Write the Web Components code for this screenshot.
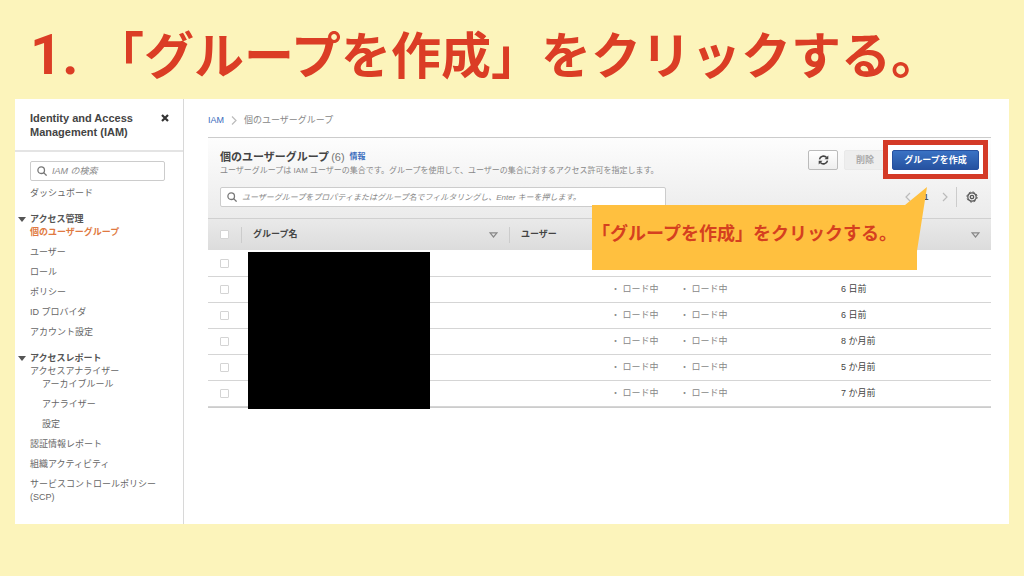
<!DOCTYPE html>
<html lang="ja">
<head>
<meta charset="utf-8">
<meta name="viewport" content="width=device-width, initial-scale=1">
<title>グループを作成</title>
<style>
  html { background: #fcf4bb; }
  body { margin: 0; font-family: "Liberation Sans", "Noto Sans CJK JP", sans-serif; font-size: 9px; line-height: 13px; color: #666; }
</style>
</head>
<body>
<tutorial-slide>
  <slide-heading slot="heading" number="1.">「グループを作成」をクリックする。</slide-heading>
  <iam-console>
    <iam-sidebar slot="sidebar">
      <nav-link>ダッシュボード</nav-link>
      <nav-section heading="アクセス管理">
        <nav-link current>個のユーザーグループ</nav-link>
        <nav-link>ユーザー</nav-link>
        <nav-link>ロール</nav-link>
        <nav-link>ポリシー</nav-link>
        <nav-link>ID プロバイダ</nav-link>
        <nav-link>アカウント設定</nav-link>
      </nav-section>
      <nav-section heading="アクセスレポート">
        <nav-link tight>アクセスアナライザー</nav-link>
        <nav-link nested>アーカイブルール</nav-link>
        <nav-link nested>アナライザー</nav-link>
        <nav-link nested>設定</nav-link>
        <nav-link>認証情報レポート</nav-link>
        <nav-link>組織アクティビティ</nav-link>
        <nav-link>サービスコントロールポリシー (SCP)</nav-link>
      </nav-section>
    </iam-sidebar>
    <bread-crumbs></bread-crumbs>
    <groups-panel>
      <group-table></group-table>
      <call-out slot="callout">「グループを作成」をクリックする。</call-out>
    </groups-panel>
  </iam-console>
</tutorial-slide>

<script>
const define = (name, html, setup) => customElements.define(name, class extends HTMLElement {
  constructor() {
    super();
    const template = document.createElement('template');
    template.innerHTML = html;
    this.attachShadow({ mode: 'open' }).append(template.content.cloneNode(true));
  }
  connectedCallback() { if (setup) setup(this, this.shadowRoot); }
});

define('tutorial-slide', `
<style>
  :host { display: block; box-sizing: border-box; padding: 22px 15px 51px; }
</style>
<slot name="heading"></slot>
<main><slot></slot></main>`);

define('slide-heading', `
<style>
  :host { display: block; height: 77px; color: #db3d25; }
  h1 { margin: 0; padding-left: 15px; display: flex; align-items: baseline; font: bold 50px/60px "Noto Sans CJK JP", sans-serif; white-space: nowrap; }
  .number { font: bold 56px/60px Roboto, sans-serif; width: 64px; }
</style>
<h1><span class="number"></span><span><slot></slot></span></h1>`,
(el, root) => { root.querySelector('.number').textContent = el.getAttribute('number'); });

define('iam-console', `
<style>
  :host { display: grid; grid-template-columns: 169px minmax(0, 1fr); background: #fff; }
  .content { padding: 13px 18px 24px 24px; }
</style>
<slot name="sidebar"></slot>
<div class="content"><slot></slot></div>`);

define('search-field', `
<style>
  :host { display: block; }
  label { display: flex; align-items: center; gap: 5px; box-sizing: border-box; height: 20px; padding: 0 6px; background: #fff; border: 1px solid #ccc; border-radius: 2px; }
  svg { flex: none; }
  input { flex: 1; min-width: 0; border: 0; padding: 0; outline: 0; background: none; font: italic var(--field-size, 9px)/13px "Liberation Sans", "Noto Sans CJK JP", sans-serif; color: #444; }
  input::placeholder { color: #888; opacity: 1; }
</style>
<label>
  <svg width="10" height="10" viewBox="0 0 10 10" fill="none" stroke="#777" stroke-width="1.3"><circle cx="4.2" cy="4.2" r="3.3"/><path d="M6.6 6.6 9.6 9.6"/></svg>
  <input type="search">
</label>`,
(el, root) => {
  const input = root.querySelector('input');
  input.placeholder = el.getAttribute('placeholder');
  input.setAttribute('aria-label', el.getAttribute('placeholder'));
});

define('iam-sidebar', `
<style>
  :host { display: block; border-right: 1px solid #d8d8d8; }
  header { display: flex; justify-content: space-between; align-items: flex-start; padding: 12px 14px 11px 15px; border-bottom: 2px solid #e4e4e4; }
  h2 { margin: 0; font: bold 11px/14px "Liberation Sans", sans-serif; color: #444; }
  button { border: 0; background: none; padding: 3px 0 0; line-height: 0; }
  .body { padding: 9px 18px 13px 15px; }
  search-field { margin-bottom: 6px; }
</style>
<header>
  <h2>Identity and Access<br>Management (IAM)</h2>
  <button type="button" aria-label="閉じる"><svg width="8" height="8" viewBox="0 0 8 8" stroke="#333" stroke-width="2.2"><path d="M1 1 7 7M7 1 1 7"/></svg></button>
</header>
<div class="body">
  <search-field placeholder="IAM の検索"></search-field>
  <nav><slot></slot></nav>
</div>`);

define('nav-link', `
<style>
  :host { display: block; margin-bottom: 7px; }
  :host([tight]) { margin-bottom: 0; }
  :host([nested]) { padding-left: 12px; }
  a { color: #666; text-decoration: none; }
  :host([current]) a { color: #e07941; font-weight: bold; }
</style>
<a href="#"><slot></slot></a>`);

define('nav-section', `
<style>
  :host { display: block; margin-top: 13px; }
  h3 { margin: 0 0 0 -12px; display: flex; align-items: center; gap: 4px; font-size: 9px; line-height: 13px; color: #555; }
</style>
<h3><svg width="8" height="5" viewBox="0 0 8 5" fill="#555"><path d="M0 0h8L4 5z"/></svg><span></span></h3>
<slot></slot>`,
(el, root) => { root.querySelector('span').textContent = el.getAttribute('heading'); });

define('bread-crumbs', `
<style>
  :host { display: block; margin-bottom: 9px; }
  nav { display: flex; align-items: center; gap: 7px; line-height: 16px; color: #888; }
  a { color: #3a6cbd; text-decoration: none; }
</style>
<nav aria-label="パンくず">
  <a href="#">IAM</a>
  <svg width="6" height="9" viewBox="0 0 6 9" fill="none" stroke="#bbb" stroke-width="1.2"><path d="M1 .5 5 4.5 1 8.5"/></svg>
  <span>個のユーザーグループ</span>
</nav>`);

define('groups-panel', `
<style>
  :host { display: block; position: relative; }
  .top { box-sizing: border-box; padding: 12px 12px 11px; border-top: 1px solid #ccc; background: linear-gradient(#fdfdfd, #ebebeb); }
  .row { display: flex; justify-content: space-between; align-items: flex-start; }
  .row + .row { margin-top: 10px; align-items: center; }
  h1 { margin: 0; font-size: 11px; line-height: 14px; color: #444; display: flex; align-items: center; white-space: nowrap; }
  .count { font-weight: normal; color: #777; margin: 0 5px 0 2px; }
  .info { font-size: 8px; color: #3a6cbd; text-decoration: none; }
  p { margin: 0; font-size: 8px; color: #888; }
  .actions { display: flex; gap: 6px; }
  button { box-sizing: border-box; height: 20px; padding: 0; border: 1px solid #bbb; border-radius: 2px; font: bold 9px/13px "Liberation Sans", "Noto Sans CJK JP", sans-serif; background: linear-gradient(#fff, #eee); display: grid; place-items: center; }
  .refresh { width: 30px; }
  .delete { width: 42px; border-color: #e9e9e9; background: #eee; color: #aaa; }
  .target { position: relative; }
  .target::before { content: ""; position: absolute; inset: -10px -9px -9px; border: 5px solid #d43a27; background: #fff; }
  .create { position: relative; width: 87px; border-color: #2650a0; color: #fff; background: linear-gradient(#3a72c4, #2652a0); }
  search-field { flex: 0 1 446px; --field-size: 8px; }
  .pager { display: flex; align-items: center; color: #555; font-weight: bold; }
  .pager button { border: 0; background: none; width: 15px; }
  .pager span { width: 22px; text-align: center; }
  .pager .settings { border-left: 1px solid #ccc; border-radius: 0; width: 23px; margin-left: 4px; padding-left: 9px; justify-items: start; }
</style>
<section class="top">
  <div class="row">
    <div>
      <h1>個のユーザーグループ<span class="count">(6)</span><a class="info" href="#">情報</a></h1>
      <p>ユーザーグループは IAM ユーザーの集合です。グループを使用して、ユーザーの集合に対するアクセス許可を指定します。</p>
    </div>
    <div class="actions">
      <button class="refresh" type="button" aria-label="更新"><svg width="11" height="10" viewBox="0 0 11 10"><g fill="none" stroke="#444" stroke-width="1.5"><path d="M1.5 4.4A4 3.8 0 0 1 8.6 2.6"/><path d="M9.5 5.6A4 3.8 0 0 1 2.4 7.4"/></g><path fill="#444" d="M10.3.4V4.3H6.5zM.7 9.6V5.7H4.5z"/></svg></button>
      <button class="delete" type="button" disabled>削除</button>
      <div class="target"><button class="create" type="button">グループを作成</button></div>
    </div>
  </div>
  <div class="row">
    <search-field placeholder="ユーザーグループをプロパティまたはグループ名でフィルタリングし、Enter キーを押します。"></search-field>
    <div class="pager">
      <button type="button" aria-label="前へ"><svg width="6" height="10" viewBox="0 0 6 10" fill="none" stroke="#bbb" stroke-width="1.2"><path d="M5 1 1 5 5 9"/></svg></button>
      <span>1</span>
      <button type="button" aria-label="次へ"><svg width="6" height="10" viewBox="0 0 6 10" fill="none" stroke="#bbb" stroke-width="1.2"><path d="M1 1 5 5 1 9"/></svg></button>
      <button class="settings" type="button" aria-label="設定"><svg width="12" height="12" viewBox="0 0 12 12" fill="none" stroke="#555"><circle cx="6" cy="6" r="4.2" stroke-width="1.2"/><circle cx="6" cy="6" r="5.1" stroke-width="1" stroke-dasharray="2 2"/><circle cx="6" cy="6" r="1.7" stroke-width="1.3"/></svg></button>
    </div>
  </div>
</section>
<slot></slot>
<slot name="callout"></slot>`);

define('group-table', `
<style>
  :host { display: block; position: relative; }
  table { width: 100%; table-layout: fixed; border-collapse: separate; border-spacing: 0; border-bottom: 1px solid #ccc; }
  th, td { padding: 0; box-sizing: border-box; height: 26px; text-align: left; font-weight: normal; white-space: nowrap; vertical-align: middle; }
  td { border-bottom: 1px solid #d5d5d5; color: #888; }
  tr:first-child td { height: 27px; }
  td.date { color: #444; padding-left: 12px; }
  thead { background: linear-gradient(#eaeaea, #dcdcdc); }
  th { height: 32px; border-top: 1px solid #d0d0d0; color: #444; font-weight: bold; }
  th > div { display: flex; justify-content: space-between; align-items: center; height: 16px; padding: 0 11px 0 12px; }
  th.lined > div { border-left: 1px solid #ccc; padding-left: 11px; }
  .check { width: 33px; padding-left: 12px; }
  .name { width: 268px; }
  .user { width: 102px; }
  .policy { width: 69px; }
  .kind { width: 149px; }
  input { appearance: none; display: block; box-sizing: border-box; width: 9px; height: 9px; margin: 0; border: 1px solid #d4d4d4; border-radius: 1px; background: #fff; }
  .mask { position: absolute; left: 40px; top: 34px; width: 182px; height: 157px; background: #000; }
</style>
<table>
  <thead><tr>
    <th class="check"><input type="checkbox" aria-label="すべて選択"></th>
    <th class="name lined"><div>グループ名<svg width="9" height="6" viewBox="0 0 9 6" fill="none" stroke="#888" stroke-width="1.2"><path d="M1 .8h7L4.5 5z"/></svg></div></th>
    <th class="user lined"><div>ユーザー</div></th>
    <th class="policy"></th>
    <th class="kind"></th>
    <th><div><span></span><svg width="9" height="6" viewBox="0 0 9 6" fill="none" stroke="#888" stroke-width="1.2"><path d="M1 .8h7L4.5 5z"/></svg></div></th>
  </tr></thead>
  <tbody></tbody>
</table>
<div class="mask"></div>`,
(el, root) => {
  const dates = ['', '6 日前', '6 日前', '8 か月前', '5 か月前', '7 か月前'];
  root.querySelector('tbody').innerHTML = dates.map((date, i) => {
    const state = date && '・ ロード中';
    return `<tr><td class="check"><input type="checkbox" aria-label="グループ ${i + 1}"></td><td></td><td></td><td>${state}</td><td>${state}</td><td class="date">${date}</td></tr>`;
  }).join('');
});

define('call-out', `
<style>
  :host { display: block; position: absolute; right: 64px; top: 50px; box-sizing: border-box; width: 335px; height: 83px; padding: 32px 0 0; background: #ffc03f; color: #d5401f; font: bold 18px/26px "Noto Sans CJK JP", sans-serif; white-space: nowrap; clip-path: polygon(0 18px, 313px 18px, 335px 0, 325px 64px, 325px 83px, 0 83px); }
</style>
<slot></slot>`);
</script>
</body>
</html>
